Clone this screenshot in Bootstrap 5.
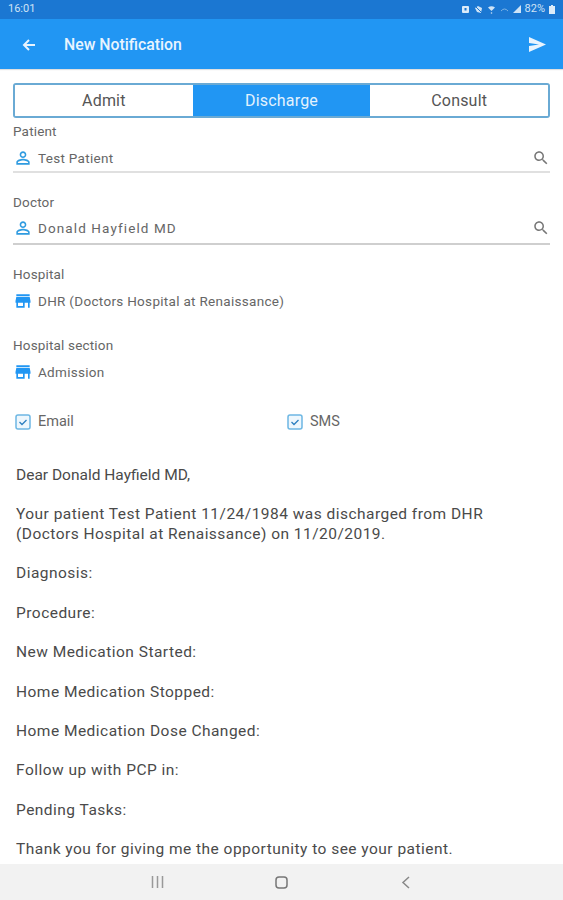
<!DOCTYPE html>
<html lang="en">
<head>
<meta charset="UTF-8">
<meta name="viewport" content="width=device-width, initial-scale=1">
<title>New Notification</title>
<link href="https://cdn.jsdelivr.net/npm/bootstrap@5.3.3/dist/css/bootstrap.min.css" rel="stylesheet">
<style>
body {
  margin: 0;
  font-family: Roboto, "Liberation Sans", sans-serif;
  background: #fff;
  color: #555;
}
.screen { width: 563px; height: 900px; overflow: hidden; }
.status-bar { height: 19px; background: #1b77d2; color: #cfe3f6; font-size: 11px; padding: 0 8px; }
.status-icons { gap: 4px; }
.app-bar { height: 51px; background: #2196f3; color: #e8f4fe; padding: 2px 17px 0 22px; box-shadow: 0 1px 1px rgba(0,0,0,.12); }
.app-title { font-size: 15.8px; font-weight: 500; margin-left: 28px; }
.form-area { flex: 1 1 auto; min-height: 0; overflow: hidden; padding: 14px 13px 0; }
.seg-group { height: 35px; border: 2px solid #6aaad4; border-radius: 3px; overflow: hidden; }
.seg-item { flex: 1 1 0; border: 0; background: #fff; color: #555; font-size: 16px; padding: 1px 0 0; letter-spacing: .2px; }
.seg-item.active { background: #2196f3; color: #e3f2fd; }
.field-label { font-size: 13.5px; line-height: 15px; color: #666; letter-spacing: .17px; }
.field-value { height: 24px; font-size: 13.5px; color: #666; letter-spacing: .3px; gap: 5px; }
.value-wide { letter-spacing: 1.1px; }
.label-patient { margin-top: 6px; margin-bottom: 7px; }
.label-doctor { margin-bottom: 6px; }
.label-place { margin-bottom: 7px; }
.rule-patient { padding-bottom: 1px; border-bottom: 2px solid #e0e0e0; margin-bottom: 22px; }
.rule-doctor { padding-bottom: 3px; border-bottom: 2px solid #cfcfcf; margin-bottom: 22px; }
.place-hospital { margin-bottom: 25px; }
.place-section { margin-bottom: 30px; }
.check-line { font-size: 14.5px; color: #666; gap: 7px; padding-left: 2px; height: 16px; }
.check-col { width: 272px; }
.letter { margin: 36px 3px 0; font-size: 15.5px; line-height: 19.72px; color: #4a4a4a; letter-spacing: .47px; }
.letter p { margin: 0 0 19.72px; }
.letter .letter-lead { letter-spacing: 0; }
.nav-strip { height: 36px; background: #f2f2f2; flex: 0 0 36px; }
.nav-slot { width: 124px; }
</style>
</head>
<body>
<div class="screen d-flex flex-column">
  <div class="status-bar d-flex align-items-center justify-content-between">
    <span>16:01</span>
    <div class="status-icons d-flex align-items-center">
      <svg width="9" height="9" viewBox="0 0 9 9"><rect x="1" y="1" width="7" height="7" rx="1" fill="#dcebf9"/><rect x="3.500" y="3" width="2" height="2.500" fill="#1b77d2"/></svg>
      <svg width="9" height="9" viewBox="0 0 9 9"><path d="M1 3l3-2 4 2-1 5-4-1z" fill="#cfe3f6"/><path d="M1 1l7 7" stroke="#1b77d2"/></svg>
      <svg width="9" height="9" viewBox="0 0 9 9"><path d="M1 2.500q3.500-2.500 7 0L4.500 6z" fill="#cfe3f6"/><circle cx="4.500" cy="8" r=".8" fill="#cfe3f6"/></svg>
      <svg width="9" height="7" viewBox="0 0 9 7"><path d="M1 5q3.500-4 7 0" fill="none" stroke="#7fb4e6"/></svg>
      <svg width="8" height="8" viewBox="0 0 8 8"><path d="M0 8 8 0v8z" fill="#cfe3f6"/></svg>
      <span>82%</span>
      <svg width="6" height="9" viewBox="0 0 6 9"><path d="M2 0h2v1h2v8H0V1h2z" fill="#dcebf9"/></svg>
    </div>
  </div>

  <div class="app-bar d-flex align-items-center">
    <svg width="14" height="14" viewBox="0 0 14 14"><path d="M13 7H2.500M7 2 2 7l5 5" fill="none" stroke="#e8f4fe" stroke-width="2"/></svg>
    <span class="app-title">New Notification</span>
    <svg class="ms-auto" width="17" height="15" viewBox="0 0 17 15"><path d="M0 0 17 7.500 0 15V9l10-1.500L0 6z" fill="#e8f4fe"/></svg>
  </div>

  <div class="form-area">
    <div class="seg-group d-flex">
      <button type="button" class="seg-item">Admit</button>
      <button type="button" class="seg-item active">Discharge</button>
      <button type="button" class="seg-item">Consult</button>
    </div>

    <div class="field-label label-patient">Patient</div>
    <div class="rule-patient">
      <div class="field-value d-flex align-items-center">
        <svg width="20" height="20" viewBox="0 0 24 24"><path fill="#2f9be0" d="M12 5.900c1.160 0 2.100.94 2.100 2.100s-.94 2.100-2.100 2.100S9.900 9.160 9.900 8s.94-2.100 2.100-2.100m0 9c2.970 0 6.100 1.460 6.100 2.100v1.100H5.900V17c0-.64 3.130-2.100 6.100-2.100M12 4C9.790 4 8 5.790 8 8s1.790 4 4 4 4-1.790 4-4-1.790-4-4-4zm0 9c-2.670 0-8 1.340-8 4v3h16v-3c0-2.660-5.330-4-8-4z"/></svg>
        <span>Test Patient</span>
        <svg class="ms-auto" width="18" height="18" viewBox="0 0 24 24"><path fill="#777" d="M15.500 14h-.79l-.28-.27C15.410 12.590 16 11.110 16 9.500 16 5.910 13.090 3 9.500 3S3 5.910 3 9.500 5.910 16 9.500 16c1.610 0 3.090-.59 4.230-1.570l.27.28v.79l5 4.990L20.490 19l-4.990-5zm-6 0C7.010 14 5 11.990 5 9.500S7.010 5 9.500 5 14 7.010 14 9.500 11.990 14 9.500 14z"/></svg>
      </div>
    </div>

    <div class="field-label label-doctor">Doctor</div>
    <div class="rule-doctor">
      <div class="field-value d-flex align-items-center">
        <svg width="20" height="20" viewBox="0 0 24 24"><path fill="#2f9be0" d="M12 5.900c1.160 0 2.100.94 2.100 2.100s-.94 2.100-2.100 2.100S9.900 9.160 9.900 8s.94-2.100 2.100-2.100m0 9c2.970 0 6.100 1.460 6.100 2.100v1.100H5.900V17c0-.64 3.130-2.100 6.100-2.100M12 4C9.790 4 8 5.790 8 8s1.790 4 4 4 4-1.790 4-4-1.790-4-4-4zm0 9c-2.670 0-8 1.340-8 4v3h16v-3c0-2.660-5.330-4-8-4z"/></svg>
        <span class="value-wide">Donald Hayfield MD</span>
        <svg class="ms-auto" width="18" height="18" viewBox="0 0 24 24"><path fill="#777" d="M15.500 14h-.79l-.28-.27C15.410 12.590 16 11.110 16 9.500 16 5.910 13.090 3 9.500 3S3 5.910 3 9.500 5.910 16 9.500 16c1.610 0 3.090-.59 4.230-1.570l.27.28v.79l5 4.990L20.490 19l-4.990-5zm-6 0C7.010 14 5 11.990 5 9.500S7.010 5 9.500 5 14 7.010 14 9.500 11.990 14 9.500 14z"/></svg>
      </div>
    </div>

    <div class="field-label label-place">Hospital</div>
    <div class="place-hospital">
      <div class="field-value d-flex align-items-center">
        <svg width="20" height="20" viewBox="0 0 24 24"><path fill="#2196f3" d="M20 4H4v2h16V4zm1 10v-2l-1-5H4l-1 5v2h1v6h10v-6h4v6h2v-6h1zm-9 4H6v-4h6v4z"/></svg>
        <span>DHR (Doctors Hospital at Renaissance)</span>
      </div>
    </div>

    <div class="field-label label-place">Hospital section</div>
    <div class="place-section">
      <div class="field-value d-flex align-items-center">
        <svg width="20" height="20" viewBox="0 0 24 24"><path fill="#2196f3" d="M20 4H4v2h16V4zm1 10v-2l-1-5H4l-1 5v2h1v6h10v-6h4v6h2v-6h1zm-9 4H6v-4h6v4z"/></svg>
        <span>Admission</span>
      </div>
    </div>

    <div class="d-flex">
      <div class="check-col check-line d-flex align-items-center">
        <svg width="16" height="16" viewBox="0 0 16 16"><rect x="1" y="1" width="14" height="14" rx="2" fill="#eef7fd" stroke="#6db7e3" stroke-width="1.500"/><path d="m4.500 8 2.500 2.500 4.500-4.500" fill="none" stroke="#2b7fc0" stroke-width="1.300"/></svg>
        <span>Email</span>
      </div>
      <div class="check-line d-flex align-items-center">
        <svg width="16" height="16" viewBox="0 0 16 16"><rect x="1" y="1" width="14" height="14" rx="2" fill="#eef7fd" stroke="#6db7e3" stroke-width="1.500"/><path d="m4.500 8 2.500 2.500 4.500-4.500" fill="none" stroke="#2b7fc0" stroke-width="1.300"/></svg>
        <span>SMS</span>
      </div>
    </div>

    <div class="letter">
      <p class="letter-lead">Dear Donald Hayfield MD,</p>
      <p>Your patient Test Patient 11/24/1984 was discharged from DHR (Doctors Hospital at Renaissance) on 11/20/2019.</p>
      <p>Diagnosis:</p>
      <p>Procedure:</p>
      <p>New Medication Started:</p>
      <p>Home Medication Stopped:</p>
      <p>Home Medication Dose Changed:</p>
      <p>Follow up with PCP in:</p>
      <p>Pending Tasks:</p>
      <p>Thank you for giving me the opportunity to see your patient.</p>
    </div>
  </div>

  <div class="nav-strip d-flex align-items-center justify-content-center">
    <div class="nav-slot d-flex justify-content-center">
      <svg width="13" height="12" viewBox="0 0 13 12"><path d="M1.500 0v12M6.500 0v12M11.500 0v12" stroke="#999" stroke-width="1.500"/></svg>
    </div>
    <div class="nav-slot d-flex justify-content-center">
      <svg width="13" height="13" viewBox="0 0 13 13"><rect x="1" y="1" width="11" height="11" rx="3" fill="none" stroke="#777" stroke-width="1.500"/></svg>
    </div>
    <div class="nav-slot d-flex justify-content-center">
      <svg width="9" height="13" viewBox="0 0 9 13"><path d="M8 1 2 6.500 8 12" fill="none" stroke="#888" stroke-width="1.500"/></svg>
    </div>
  </div>
</div>
<script src="https://cdn.jsdelivr.net/npm/bootstrap@5.3.3/dist/js/bootstrap.bundle.min.js"></script>
</body>
</html>
